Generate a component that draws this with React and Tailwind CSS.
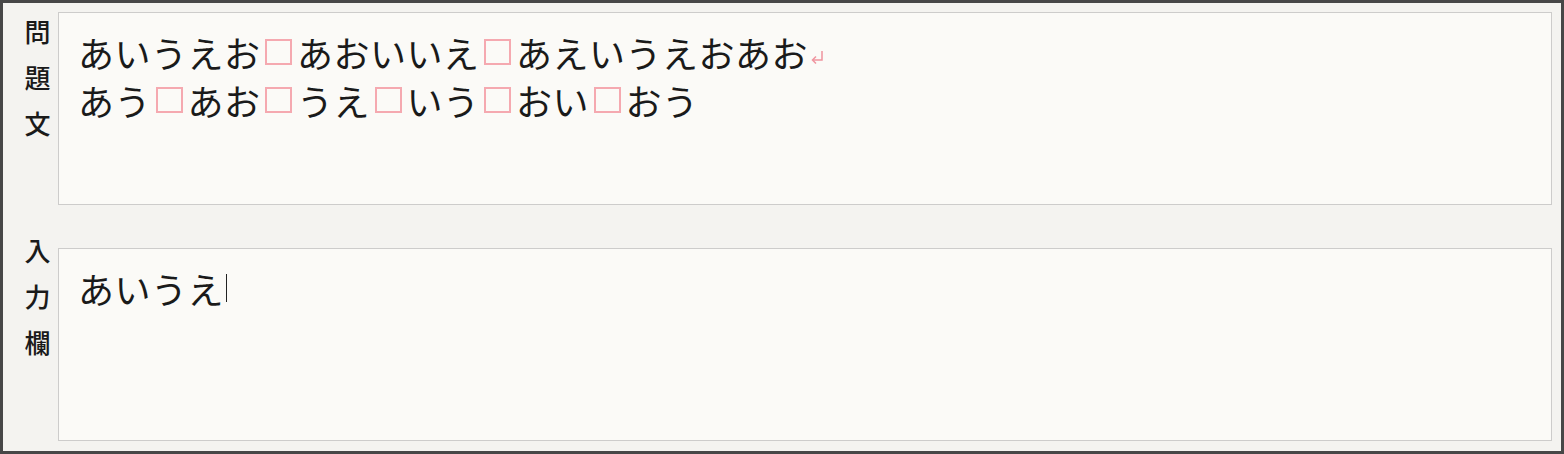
import React from 'react';

const font = { fontFamily: '"Noto Sans CJK JP", "Noto Sans", sans-serif' };

// pink placeholder square, one full-width cell
const Blank = () => (
  <span className="inline-flex w-[36.5px] justify-center align-[-4px]">
    <span className="block h-[26px] w-[27px] border-2 border-[#f5a9b0]" />
  </span>
);

const ReturnMark = () => (
  <svg className="ml-[2px] mt-[10px] inline-block" width="15" height="14" viewBox="0 0 15 14" fill="none" stroke="#f0949e" strokeWidth="1.5">
    <path d="M12 1v9H3" />
    <path d="M6 6.5 2.5 10 6 13.5" />
  </svg>
);

// renders text where each "□" becomes a blank cell
const Line = ({ text }) => (
  <div className="flex h-[48px] items-center whitespace-nowrap">
    {text.split('□').map((part, i, arr) => (
      <React.Fragment key={i}>
        <span className="tracking-[0.5px]">{part}</span>
        {i < arr.length - 1 && <Blank />}
      </React.Fragment>
    ))}
  </div>
);

const Label = ({ chars, className }) => (
  <div className={`flex w-[55px] shrink-0 flex-col items-center pl-[14px] text-[26px] font-medium text-[#1a1a1a] ${className}`}>
    {chars.split('').map((c, i) => (
      <div key={i} className="h-[46px] leading-[46px]">{c}</div>
    ))}
  </div>
);

const Box = ({ children }) => (
  <div className="h-[193px] flex-1 border border-[#cdcccb] bg-[#fbfaf7] pl-[19px] pt-[15px] text-[36px] leading-[48px] text-[#1a1a1a]">
    {children}
  </div>
);

export default function App() {
  return (
    <div className="h-[454px] w-[1564px] border-[3px] border-[#474747] bg-[#f4f3f0]" style={font}>
      <div className="flex flex-col gap-[43px] pr-[9px] pt-[9px]">
        <div className="flex">
          <Label chars="問題文" className="-mt-[4px]" />
          <Box>
            <div className="flex items-center">
              <Line text="あいうえお□あおいいえ□あえいうえおあお" />
              <ReturnMark />
            </div>
            <Line text="あう□あお□うえ□いう□おい□おう" />
          </Box>
        </div>
        <div className="flex">
          <Label chars="入力欄" className="-mt-[21px]" />
          <Box>
            <div className="flex h-[48px] items-center">
              <span className="tracking-[0.5px]">あいうえ</span>
              <span className="ml-[2px] block h-[28px] w-px bg-[#222]" />
            </div>
          </Box>
        </div>
      </div>
    </div>
  );
}
